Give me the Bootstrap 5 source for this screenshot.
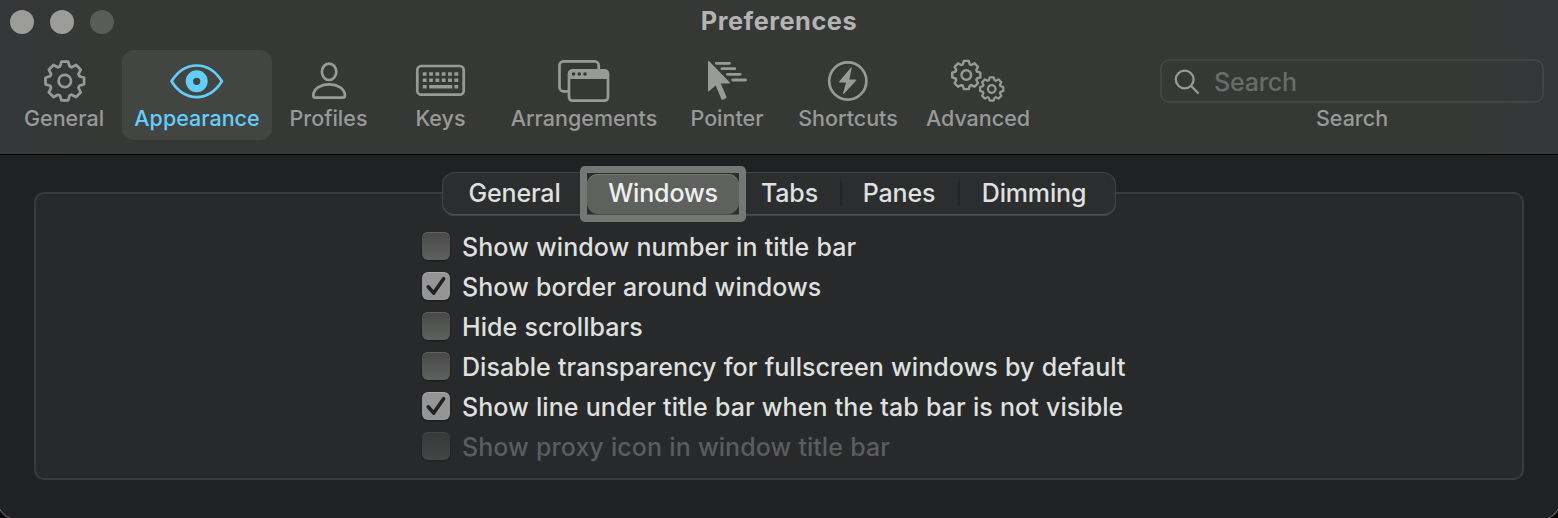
<!DOCTYPE html>
<html lang="en">
<head>
<meta charset="utf-8">
<title>Preferences</title>
<link href="https://cdn.jsdelivr.net/npm/bootstrap@5.3.0/dist/css/bootstrap.min.css" rel="stylesheet">
<style>
html, body { height: 518px; overflow: hidden; }
body { background: #000; font-family: Inter, "Liberation Sans", sans-serif; font-weight: 500; color: #dfe0df; }
.win { margin: 0 -3px; height: 520px; padding: 0 2px; background: #202123; border: 1px solid #6b6c6b; border-top: 0; border-radius: 0 0 20px 20px; }
.chrome { height: 155px; background: linear-gradient(90deg, #353638, #363836 6%, #363836 94%, #353639); border-bottom: 1px solid #000; }
.titlebar { height: 50px; }
.lights { gap: 16px; padding: 10px 0 0 10px; width: 200px; }
.lights i { width: 24px; height: 24px; border-radius: 50%; background: #9c9d9b; }
.lights i:last-child { background: #5a5c5a; }
.win-title { font-size: 25.3px; font-weight: 700; line-height: 42px; color: #b3b4b3; letter-spacing: .55px; }
.tools { display: grid; grid-template-columns: 112px 154px 109px 115px 172px 114px 128px 132px; padding-left: 8px; }
.tool { height: 90px; margin: 0 2px; padding-top: 6px; border-radius: 12px; color: #989a98; font-size: 21.5px; line-height: 28px; text-decoration: none; white-space: nowrap; }
.tool.active { background: #434543; color: #62cffb; }
.tool svg { width: 64px; height: 48px; fill: none; stroke: currentColor; stroke-width: 2.7; stroke-linejoin: round; stroke-linecap: round; }
.tool svg .solid { fill: currentColor; stroke: none; }
.finder { width: 384px; margin: 9px 14px 0 0; color: #989a98; font-size: 21.5px; line-height: 30px; }
.finder-box { height: 44px; border: 2px solid #434543; border-radius: 9px; padding-left: 12px; background: transparent; }
.finder-box input { background: none; border: 0; outline: 0; font-size: 25px; color: #ddd; padding: 2px 0 0 14px; width: 300px; font-weight: 500; letter-spacing: -.2px; }
.finder-box input::placeholder { color: #6a6c6a; opacity: 1; }
.panel { margin: 37px 34px 0; height: 288px; border: 2px solid #3a3b3d; border-radius: 10px; background: #28292b; }
.seg { display: grid; grid-template-columns: 145px 152px 101px 118px 158px; width: 674px; height: 44px; margin-top: -22px; background: #2c2d2f; border-radius: 13px; box-shadow: inset 0 0 0 1px #424345, inset 0 -2px 0 #4c4d4e; font-size: 25px; letter-spacing: -.15px; }
.seg button { border: 0; padding: 0; background: none; color: #dfe0df; font-weight: 500; letter-spacing: inherit; line-height: 41px; height: 42px; white-space: nowrap; }
.seg .on { position: relative; background: #5f615f; border-radius: 11px; height: 40px; margin: 2px 0 0 0; padding-bottom: 2px; line-height: 36px; box-shadow: inset 0 1px 0 #777977; color: #f0f0f0; }
.seg .on::after { content: ""; position: absolute; inset: -8px -7px; border: 7px solid #757775; border-radius: 5px; }
.cut { background: linear-gradient(#232426, #232426) left center / 2px 24px no-repeat !important; }
.seg .dim { padding-right: 6px; }
.opts { padding: 10px 0 0 386px; }
.opt { height: 40px; gap: 12px; font-size: 25px; line-height: 38px; padding: 0; margin: 0; min-height: 0; white-space: nowrap; letter-spacing: .05px; word-spacing: .5px; }
.opt label { padding-top: 2px; }
.opt .form-check-input { width: 28px; height: 28px; margin: 0; float: none; border: 0; border-radius: 6px; background-color: transparent; background-image: linear-gradient(#474847, #5f615f); background-size: 100%; box-shadow: inset 0 1px 0 #606160, 0 1px 2px #0006; }
.opt .form-check-input:checked { background-color: #949594; background-image: url("data:image/svg+xml,%3Csvg xmlns='http://www.w3.org/2000/svg' viewBox='0 0 28 28'%3E%3Cpath d='M6.3 15l5.4 6L21.6 6.8' fill='none' stroke='%23212223' stroke-width='3.7' stroke-linecap='round' stroke-linejoin='round'/%3E%3C/svg%3E"); box-shadow: inset 0 1px 0 #aaa, 0 1px 2px #0006; }
.opt .form-check-input:disabled ~ label { opacity: 1; color: #5b5c5e; }
</style>
</head>
<body>
<svg class="d-none"><defs><path id="gear" vector-effect="non-scaling-stroke" d="M-4.8-14.6L-3.3-19.3H3.3L4.8-14.6 6.9-13.7 11.3-16 16-11.3 13.7-6.9 14.6-4.8 19.3-3.3V3.3L14.6 4.8 13.7 6.9 16 11.3 11.3 16 6.9 13.7 4.8 14.6 3.3 19.3H-3.3L-4.8 14.6-6.9 13.7-11.3 16-16 11.3-13.7 6.9-14.6 4.8-19.3 3.3V-3.3L-14.6-4.8-13.7-6.9-16-11.3-11.3-16-6.9-13.7Z"/></defs></svg>
<div class="win">
  <header class="chrome">
    <div class="titlebar d-flex">
      <div class="lights d-flex"><i></i><i></i><i></i></div>
      <div class="win-title flex-grow-1 text-center">Preferences</div>
      <div style="width:200px"></div>
    </div>
    <div class="d-flex justify-content-between align-items-start">
      <nav class="tools">
        <a class="tool d-flex flex-column align-items-center" href="#"><svg viewBox="-32 -24 64 48"><g transform="translate(.8 1)"><use href="#gear"/><circle r="6.2"/></g></svg><span>General</span></a>
        <a class="tool active d-flex flex-column align-items-center" href="#"><svg viewBox="-32 -24 64 48"><path d="M-25.5 1.3C-19-9-10-14.500-.3-14.500S18.400-9 24.900 1.300C18.400 11.600 9.400 17.100-.3 17.100S-19 11.600-25.500 1.300Z"/><circle cx="-.3" cy="1.300" r="7.300" stroke-width="7.400"/></svg><span>Appearance</span></a>
        <a class="tool d-flex flex-column align-items-center" href="#"><svg viewBox="-31.500 -24 64 48"><ellipse cx=".6" cy="-8.200" rx="7.200" ry="8.200"/><path d="M-15.200 15.500C-15.200 9-8 4.300.6 4.300S16.400 9 16.400 15.500Q16.400 17.700 14.200 17.700H-13Q-15.200 17.700-15.200 15.500Z"/></svg><span>Profiles</span></a>
        <a class="tool d-flex flex-column align-items-center" href="#"><svg viewBox="-31.500 -24 64 48"><rect x="-23.200" y="-14" width="46.400" height="28.700" rx="4"/><g stroke-linecap="butt" stroke-width="3.600"><path stroke-dasharray="3.800 2.520" d="M-17.700-6H18M-17.700.3H18"/><path d="M-17.700 6.800h3.800M-11.300 6.800H11.700M13.900 6.800h3.800"/></g></svg><span>Keys</span></a>
        <a class="tool d-flex flex-column align-items-center" href="#"><svg viewBox="-32 -24 64 48"><path d="M-16 11.300h-4.500a4 4 0 0 1-4-4v-22a4 4 0 0 1 4-4H10.700a4 4 0 0 1 4 4v4"/><rect x="-15" y="-9.700" width="39" height="30.400" rx="3.500"/><path class="solid" fill-rule="evenodd" d="M-15-1V-7q0-3 3-3H21q3 0 3 3v6ZM-12.200-6a1.800 1.800 0 1 0 3.600 0 1.800 1.800 0 1 0-3.600 0ZM-6.500-6a1.800 1.800 0 1 0 3.600 0 1.800 1.800 0 1 0-3.600 0ZM-.8-6a1.800 1.800 0 1 0 3.600 0 1.800 1.800 0 1 0-3.600 0Z"/></svg><span>Arrangements</span></a>
        <a class="tool d-flex flex-column align-items-center" href="#"><svg viewBox="-32 -24 64 48"><path class="solid" d="M-19-18.500Q-19-20-17.800-18.800L2.700 2.300Q3.600 3.400 2.200 3.400H-6.300L-.5 16.800Q-.2 17.800-1.200 18.300L-4 19.700Q-5.200 20-5.600 19L-11.300 5.500-17.800 11Q-19 12-19 10.500Z"/><path stroke-width="2.800" d="M-10.700-16.700H2.500M-5-11.300H7.800M.4-5.700H13.100M5.700 0H18.500"/></svg><span>Pointer</span></a>
        <a class="tool d-flex flex-column align-items-center" href="#"><svg viewBox="-32 -24 64 48"><circle cx="-.2" cy="1" r="18.600"/><path class="solid" d="M3-12.600Q4-13.200 3.700-12L1.400-.6H7.600Q9-.4 8 .8L-4 13.800Q-5.300 14.600-4.900 13.200L-2 2.600H-8Q-9.600 2.400-8.600 1.200Z"/></svg><span>Shortcuts</span></a>
        <a class="tool d-flex flex-column align-items-center" href="#"><svg viewBox="-32 -24 64 48"><g stroke-width="2.400" transform="translate(-11.700 -5) scale(.73)"><use href="#gear"/><circle r="6.600" vector-effect="non-scaling-stroke"/></g><g stroke-width="2.200" transform="translate(13.700 9) scale(.6)"><use href="#gear"/><circle r="6.300" vector-effect="non-scaling-stroke"/></g></svg><span>Advanced</span></a>
      </nav>
      <div class="finder text-center">
        <div class="finder-box d-flex align-items-center"><svg width="26" height="28" viewBox="0 0 26 28" fill="none" stroke="#989a98" stroke-width="2.300" stroke-linecap="round"><circle cx="10.700" cy="12.500" r="8.900"/><path d="M17.200 19l6.800 7"/></svg><input type="text" placeholder="Search" aria-label="Search"></div>
        <span class="d-block">Search</span>
      </div>
    </div>
  </header>
  <main class="panel">
    <div class="seg mx-auto">
      <button>General</button><button class="on">Windows</button><button>Tabs</button><button class="cut">Panes</button><button class="cut dim">Dimming</button>
    </div>
    <div class="opts">
      <div class="opt form-check d-flex align-items-center"><input class="form-check-input" type="checkbox" id="o1"><label for="o1">Show window number in title bar</label></div>
      <div class="opt form-check d-flex align-items-center"><input class="form-check-input" type="checkbox" id="o2" checked><label for="o2">Show border around windows</label></div>
      <div class="opt form-check d-flex align-items-center"><input class="form-check-input" type="checkbox" id="o3"><label for="o3">Hide scrollbars</label></div>
      <div class="opt form-check d-flex align-items-center"><input class="form-check-input" type="checkbox" id="o4"><label for="o4">Disable transparency for fullscreen windows by default</label></div>
      <div class="opt form-check d-flex align-items-center"><input class="form-check-input" type="checkbox" id="o5" checked><label for="o5">Show line under title bar when the tab bar is not visible</label></div>
      <div class="opt form-check d-flex align-items-center"><input class="form-check-input" type="checkbox" id="o6" disabled><label for="o6">Show proxy icon in window title bar</label></div>
    </div>
  </main>
</div>
<script src="https://cdn.jsdelivr.net/npm/bootstrap@5.3.0/dist/js/bootstrap.bundle.min.js"></script>
</body>
</html>
